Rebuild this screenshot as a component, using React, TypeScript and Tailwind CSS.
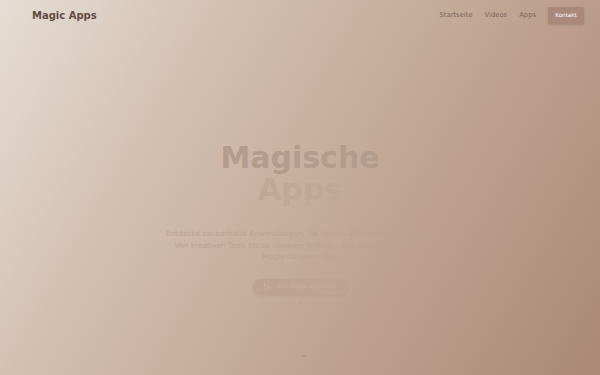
import React from 'react';

const navLinks = ['Startseite', 'Videos', 'Apps'];

export default function App() {
  return (
    <div
      className="relative w-[600px] h-[375px] overflow-hidden bg-[linear-gradient(120deg,#e6ddd4_0%,#d4c0b1_28%,#c3a896_58%,#a98975_100%)]"
      style={{ fontFamily: '"DejaVu Sans", "Noto Sans", sans-serif' }}
    >
      <header className="flex items-center justify-between h-[30px] pl-8 pr-4">
        <div className="text-[10px] font-bold text-[#5f4b42]">Magic Apps</div>
        <nav className="flex items-center gap-3">
          {navLinks.map((l) => (
            <a key={l} className="text-[6.8px] text-[#7d665b]">
              {l}
            </a>
          ))}
          <button className="h-[17px] w-[36px] rounded-[2px] bg-[#a98979] text-[5.6px] font-medium text-white shadow-sm">
            Kontakt
          </button>
        </nav>
      </header>

      <main className="flex flex-col items-center">
        <h1 className="mt-[112px] text-center text-[30px] font-bold leading-[32px]">
          <span className="block text-[#b49c8c]">Magische</span>
          <span className="block text-[#c1a894]">Apps</span>
        </h1>
        <p className="mt-[22px] w-[272px] text-center text-[7.4px] leading-[11.5px] text-[#bca391]">
          Entdecke zauberhafte Anwendungen, die deinen Alltag leichter machen. Von kreativen Tools bis zu
          cleveren Helfern – hier findest du digitale Magie für jeden Tag.
        </p>
        <button className="mt-[16px] flex items-center gap-[5px] h-[16px] w-[94px] justify-center rounded-full bg-[#bea490] text-[6.5px] text-[#c6af9e] shadow-[0_1px_3px_rgba(120,90,70,0.1)]">
          <svg width="8" height="8" viewBox="0 0 24 24" fill="none" stroke="#c9b2a1" strokeWidth="2.5" strokeLinecap="round" strokeLinejoin="round">
            <path d="M5 3l14 9-14 9V3z" />
          </svg>
          Alle Apps ansehen
        </button>
        <div className="mt-[6px] w-[3px] h-[3px] rounded-full bg-[#bba18e]" />
      </main>

      <div className="absolute left-[300px] top-[352px]">
        <svg width="8" height="8" viewBox="0 0 24 24" fill="none" stroke="#a88e7d" strokeWidth="3" strokeLinecap="round" strokeLinejoin="round">
          <path d="M6 9l6 6 6-6" />
        </svg>
      </div>
    </div>
  );
}
